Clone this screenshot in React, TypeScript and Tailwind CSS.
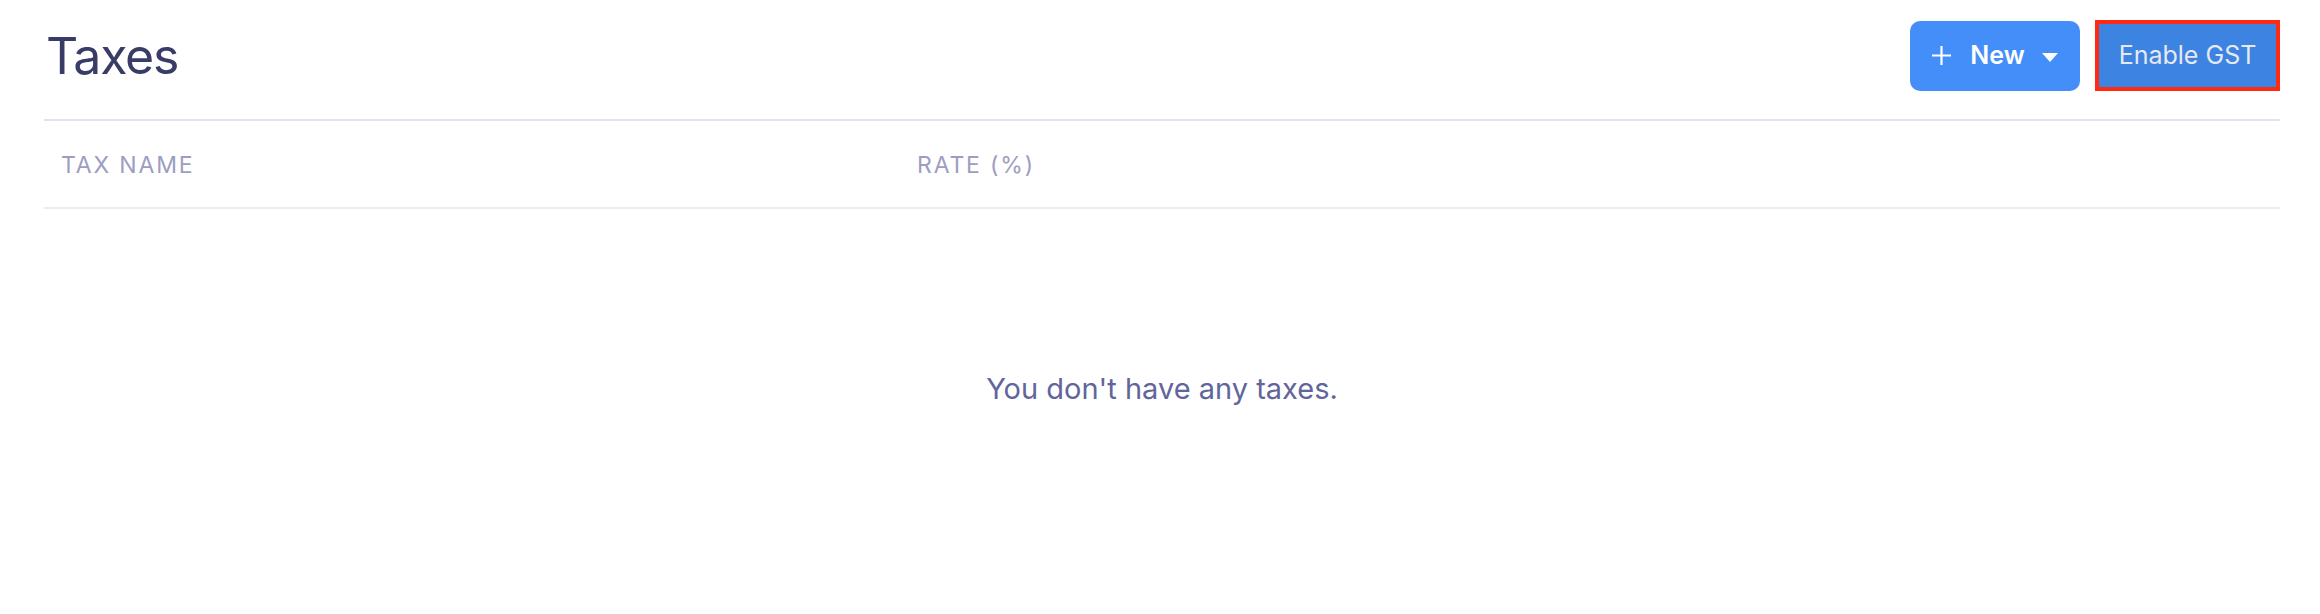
export default function App() {
  return (
    <div
      className="min-h-[614px] bg-white pl-[44px] pr-[40px]"
      style={{ fontFamily: "Inter, 'Noto Sans', sans-serif" }}
    >
      {/* Page header */}
      <div className="flex items-center justify-between border-b-2 border-[#e1e1f1] pt-[20px] pb-[28px]">
        <h1 className="pl-[2px] text-[50px] leading-none font-normal tracking-[-0.025em] text-[#393c66]">Taxes</h1>
        <div className="flex items-center gap-[15px]">
          <button className="flex h-[70px] w-[170px] items-center justify-center rounded-[10px] bg-[#448ef9] text-[25px] font-semibold text-white">
            <svg width="19" height="19" viewBox="0 0 19 19">
              <path d="M9.5 0v19M0 9.5h19" stroke="white" strokeWidth="2.2" />
            </svg>
            <span className="pl-[19px]">New</span>
            <svg width="16" height="9" viewBox="0 0 16 9" className="ml-[17px] mt-[4px]">
              <path d="M0 0h16L8 9z" fill="white" />
            </svg>
          </button>
          <button className="flex h-[71px] w-[185px] items-center justify-center border-4 border-[#ff2a12] bg-[#3d83e2] text-[25px] font-normal text-[#e6e9f0]">
            Enable GST
          </button>
        </div>
      </div>

      {/* Table header */}
      <div className="grid h-[88px] grid-cols-[873px_1fr] items-center border-b-2 border-[#ebeaf6] pt-[3px] text-[23px] tracking-[0.08em] text-[#9d9dc2]">
        <div className="pl-[17px]">TAX NAME</div>
        <div>RATE (%)</div>
      </div>

      {/* Empty state */}
      <div className="flex justify-center pt-[158px] text-[29px] text-[#61659b]">
        You don't have any taxes.
      </div>
    </div>
  )
}
